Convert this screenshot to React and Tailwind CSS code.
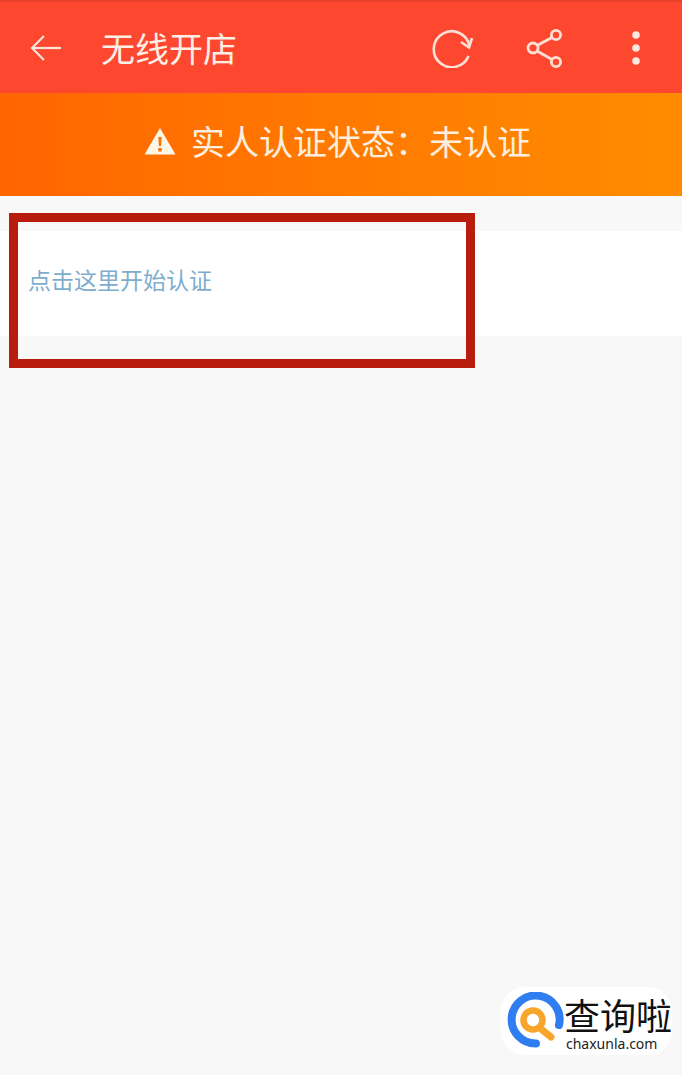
const cjk = "font-['Noto_Sans_CJK_SC','Noto_Sans',sans-serif]"

function BackIcon() {
  return (
    <svg width="34" height="30" viewBox="0 0 34 30" fill="none" stroke="#fde4da" strokeWidth="2.2">
      <path d="M32 15H3" />
      <path d="M15 3L3 15l12 12" />
    </svg>
  )
}

function RefreshIcon() {
  return (
    <svg width="42" height="40" viewBox="0 0 42 40" fill="none" stroke="#fde0d4" strokeWidth="2.6">
      <path d="M36.500 28A18 18 0 1 1 37.500 18" />
      <path d="M29 14l8 5.500 3-9.500" />
    </svg>
  )
}

function ShareIcon() {
  return (
    <svg width="38" height="40" viewBox="0 0 38 40" fill="none" stroke="#fde0d4" strokeWidth="2.8">
      <circle cx="8" cy="20" r="5" />
      <circle cx="31" cy="7" r="4.6" />
      <circle cx="31" cy="34" r="4.6" />
      <path d="M12 17.500L27 9.500M12 23l15 8.500" />
    </svg>
  )
}

function MoreIcon() {
  return (
    <svg width="10" height="36" viewBox="0 0 10 36" fill="#fde6dc">
      <circle cx="5" cy="5" r="3.8" />
      <circle cx="5" cy="18" r="3.8" />
      <circle cx="5" cy="31" r="3.8" />
    </svg>
  )
}

function WarningIcon() {
  return (
    <svg width="32" height="28" viewBox="0 0 32 28">
      <path d="M16 1L31.500 27.500H.5z" fill="#fff6ea" />
      <path d="M14.300 10h3.400l-.6 9h-2.200zM14.300 21h3.400v3.400h-3.400z" fill="#ff7400" />
    </svg>
  )
}

function LogoMark() {
  return (
    <svg width="58" height="58" viewBox="0 0 58 58" fill="none">
      <path d="M52 33A24 24 0 1 0 29 51.500" stroke="#2f7df0" strokeWidth="8" strokeLinecap="round" />
      <circle cx="26" cy="28" r="9.500" stroke="#f9a52b" strokeWidth="6.500" />
      <path d="M34 37l10 8" stroke="#f9a52b" strokeWidth="7" strokeLinecap="round" />
    </svg>
  )
}

export default function App() {
  return (
    <div className={`relative h-[1075px] w-[682px] overflow-hidden bg-[#f8f8f8] ${cjk}`}>
      <header className="flex h-[93px] items-center border-t-2 border-[#e8422c] bg-[#fe472f] pr-[41px] pl-[29px]">
        <BackIcon />
        <h1 className="ml-[38px] text-[34px] leading-none whitespace-nowrap text-[#fdeee6]">无线开店</h1>
        <div className="ml-auto flex items-center">
          <RefreshIcon />
          <div className="ml-[51px]">
            <ShareIcon />
          </div>
          <div className="ml-[68px]">
            <MoreIcon />
          </div>
        </div>
      </header>

      <div className="flex h-[103px] items-center justify-center gap-[15px] bg-gradient-to-r from-[#ff6500] to-[#ff8c00] pr-[7px] pb-[8px] text-[34px] text-[#fdeedd]">
        <WarningIcon />
        <span className="leading-none whitespace-nowrap">实人认证状态：未认证</span>
      </div>

      <div className="mt-[35px] flex h-[105px] items-center bg-white pb-[8px] pl-[28px] text-[23px] text-[#7fadcc]">
        点击这里开始认证
      </div>

      {/* annotation drawn over the screenshot */}
      <div className="absolute top-[213px] left-[9px] h-[155px] w-[466px] border-[9px] border-[#b71c0c]" />

      <div className="absolute top-[987px] left-[501px] flex h-[68px] w-[171px] items-center rounded-[24px] bg-white pl-[6px]">
        <LogoMark />
        <div className="-ml-[1px] flex flex-col items-start pt-[4px]">
          <span className="text-[36px] leading-[42px] whitespace-nowrap text-[#111]">查询啦</span>
          <span className="ml-[2px] font-['Noto_Sans',sans-serif] text-[14px] leading-[18px] whitespace-nowrap text-[#222]">chaxunla.com</span>
        </div>
      </div>
    </div>
  )
}
